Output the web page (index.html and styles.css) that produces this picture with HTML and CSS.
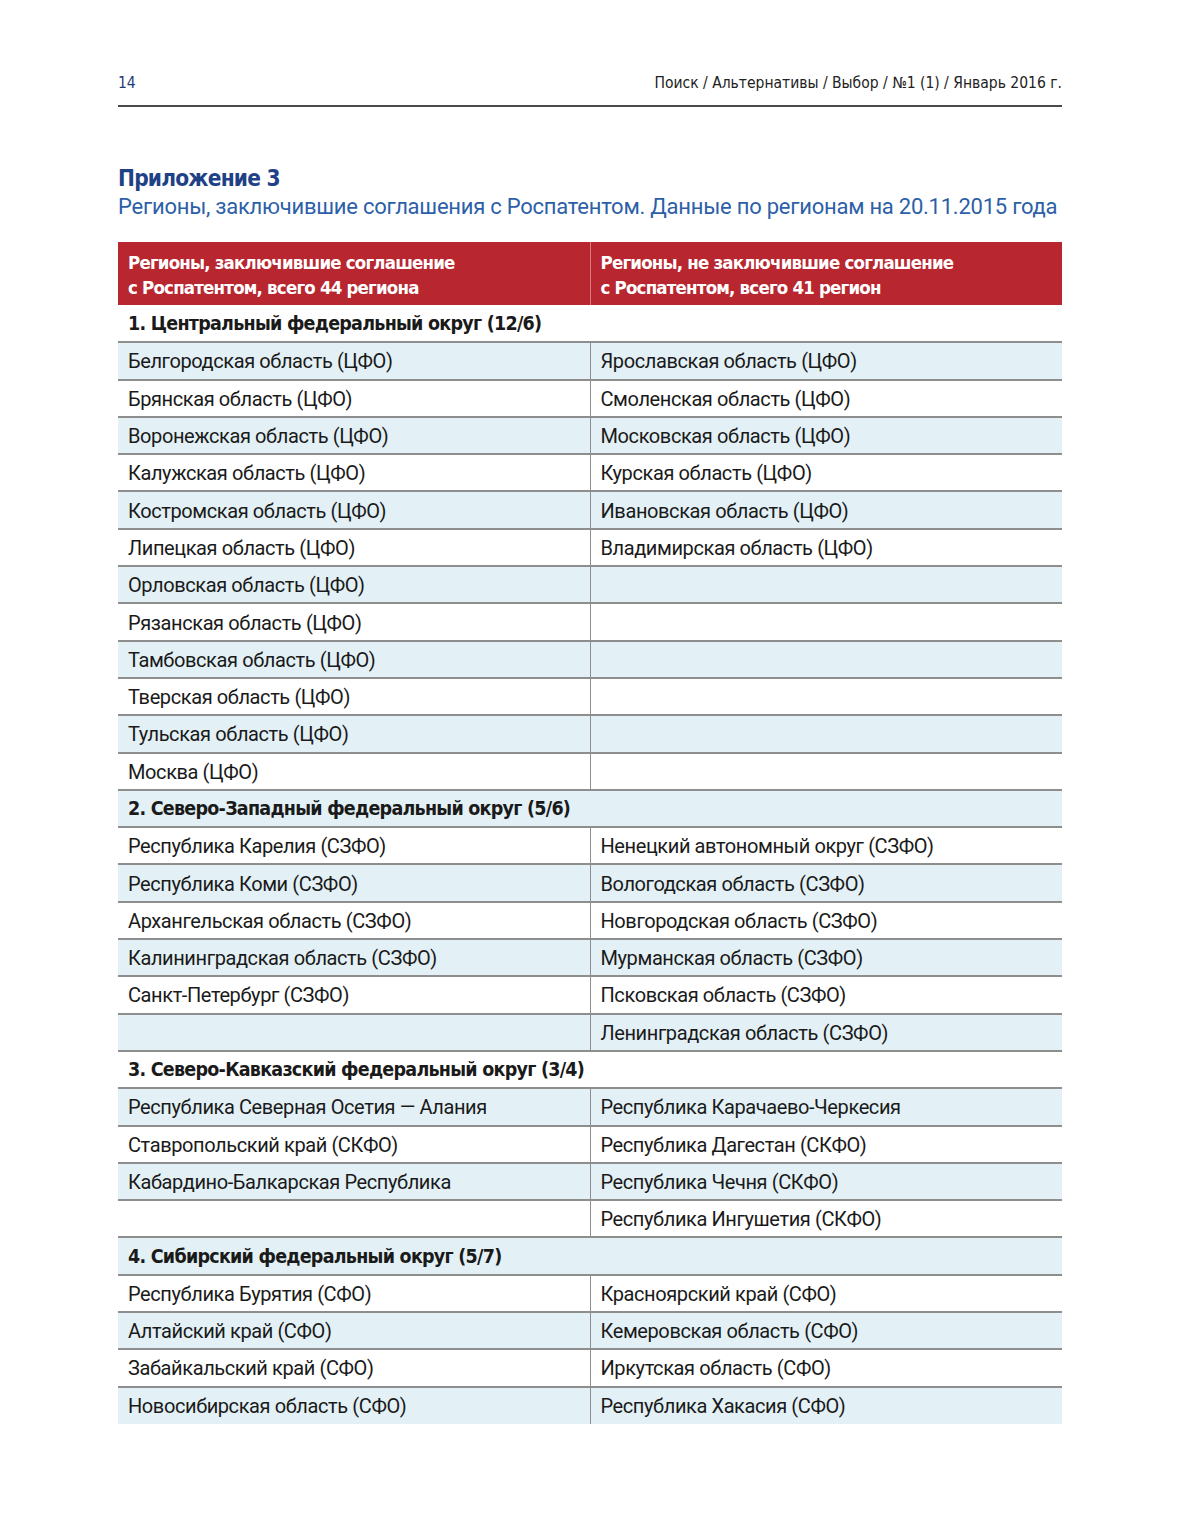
FILE: index.html
```html
<!DOCTYPE html>
<html lang="ru">
<head>
<meta charset="utf-8">
<link rel="stylesheet" href="styles.css">
</head>
<body>
<div class="page">
  <header class="runhead">
    <span class="pagenum">14</span>
    <span class="crumbs">Поиск / Альтернативы / Выбор / №1 (1) / Январь 2016 г.</span>
  </header>

  <h1 class="title">Приложение 3</h1>
  <p class="subtitle">Регионы, заключившие соглашения с Роспатентом. Данные по регионам на 20.11.2015 года</p>

  <table class="regions">
    <thead>
      <tr>
        <th>Регионы, заключившие соглашение<br>с Роспатентом, всего 44 региона</th>
        <th>Регионы, не заключившие соглашение<br>с Роспатентом, всего 41 регион</th>
      </tr>
    </thead>
    <tbody>
      <tr class="sec"><td colspan="2">1. Центральный федеральный округ (12/6)</td></tr>
      <tr><td>Белгородская область (ЦФО)</td><td>Ярославская область (ЦФО)</td></tr>
      <tr><td>Брянская область (ЦФО)</td><td>Смоленская область (ЦФО)</td></tr>
      <tr><td>Воронежская область (ЦФО)</td><td>Московская область (ЦФО)</td></tr>
      <tr><td>Калужская область (ЦФО)</td><td>Курская область (ЦФО)</td></tr>
      <tr><td>Костромская область (ЦФО)</td><td>Ивановская область (ЦФО)</td></tr>
      <tr><td>Липецкая область (ЦФО)</td><td>Владимирская область (ЦФО)</td></tr>
      <tr><td>Орловская область (ЦФО)</td><td></td></tr>
      <tr><td>Рязанская область (ЦФО)</td><td></td></tr>
      <tr><td>Тамбовская область (ЦФО)</td><td></td></tr>
      <tr><td>Тверская область (ЦФО)</td><td></td></tr>
      <tr><td>Тульская область (ЦФО)</td><td></td></tr>
      <tr><td>Москва (ЦФО)</td><td></td></tr>
      <tr class="sec"><td colspan="2">2. Северо-Западный федеральный округ (5/6)</td></tr>
      <tr><td>Республика Карелия (СЗФО)</td><td>Ненецкий автономный округ (СЗФО)</td></tr>
      <tr><td>Республика Коми (СЗФО)</td><td>Вологодская область (СЗФО)</td></tr>
      <tr><td>Архангельская область (СЗФО)</td><td>Новгородская область (СЗФО)</td></tr>
      <tr><td>Калининградская область (СЗФО)</td><td>Мурманская область (СЗФО)</td></tr>
      <tr><td>Санкт-Петербург (СЗФО)</td><td>Псковская область (СЗФО)</td></tr>
      <tr><td></td><td>Ленинградская область (СЗФО)</td></tr>
      <tr class="sec"><td colspan="2">3. Северо-Кавказский федеральный округ (3/4)</td></tr>
      <tr><td>Республика Северная Осетия — Алания</td><td>Республика Карачаево-Черкесия</td></tr>
      <tr><td>Ставропольский край (СКФО)</td><td>Республика Дагестан (СКФО)</td></tr>
      <tr><td>Кабардино-Балкарская Республика</td><td>Республика Чечня (СКФО)</td></tr>
      <tr><td></td><td>Республика Ингушетия (СКФО)</td></tr>
      <tr class="sec"><td colspan="2">4. Сибирский федеральный округ (5/7)</td></tr>
      <tr><td>Республика Бурятия (СФО)</td><td>Красноярский край (СФО)</td></tr>
      <tr><td>Алтайский край (СФО)</td><td>Кемеровская область (СФО)</td></tr>
      <tr><td>Забайкальский край (СФО)</td><td>Иркутская область (СФО)</td></tr>
      <tr><td>Новосибирская область (СФО)</td><td>Республика Хакасия (СФО)</td></tr>
    </tbody>
  </table>
</div>
</body>
</html>
```

FILE: styles.css
```css
html, body {
  margin: 0;
  padding: 0;
  background: #ffffff;
}

body {
  font-family: "Roboto", "Liberation Sans", sans-serif;
  color: #1a1a1a;
}

.page {
  width: 944px;
  margin: 0 0 0 118px;
  padding-top: 72px;
}

.runhead {
  display: flex;
  justify-content: space-between;
  align-items: baseline;
  padding-bottom: 11px;
  border-bottom: 2px solid #4a4a4a;
  font-family: "DejaVu Sans Condensed", "Roboto", sans-serif;
  font-size: 15.5px;
  line-height: 22px;
}

.pagenum {
  color: #1e3a78;
}

.crumbs {
  color: #222222;
}

.title {
  margin: 56px 0 0 0;
  font-family: "DejaVu Sans Condensed", "Roboto", sans-serif;
  font-weight: bold;
  font-size: 22.5px;
  line-height: 30px;
  letter-spacing: -0.8px;
  color: #1f4287;
}

.subtitle {
  margin: 0;
  font-size: 22px;
  line-height: 28px;
  color: #2d5fa8;
  letter-spacing: -0.24px;
  white-space: nowrap;
}

.regions {
  margin-top: 21px;
  width: 944px;
  border-collapse: collapse;
  table-layout: fixed;
}

.regions th {
  width: 50%;
  background: #b8262f;
  color: #ffffff;
  text-align: left;
  vertical-align: middle;
  font-family: "DejaVu Sans Condensed", "Roboto", sans-serif;
  font-weight: bold;
  font-size: 18.5px;
  letter-spacing: -0.8px;
  line-height: 25px;
  height: 63px;
  padding: 3px 10px 0 10px;
  box-sizing: border-box;
}

.regions th + th {
  border-left: 1px solid #d77a80;
}

.regions td {
  height: 37.3px;
  padding: 1px 10px 0 10px;
  box-sizing: border-box;
  font-size: 20px;
  line-height: 24px;
  vertical-align: middle;
  white-space: nowrap;
  letter-spacing: -0.4px;
}

.regions tbody tr + tr td {
  border-top: 2px solid #8e8e8e;
}

.regions td + td {
  border-left: 1.5px solid #8e8e8e;
}

.regions tbody tr:nth-child(even) td {
  background: #e3f1f6;
}

.regions tr.sec td {
  font-family: "DejaVu Sans Condensed", "Roboto", sans-serif;
  font-weight: bold;
  font-size: 19.5px;
  letter-spacing: -0.75px;
}
```
